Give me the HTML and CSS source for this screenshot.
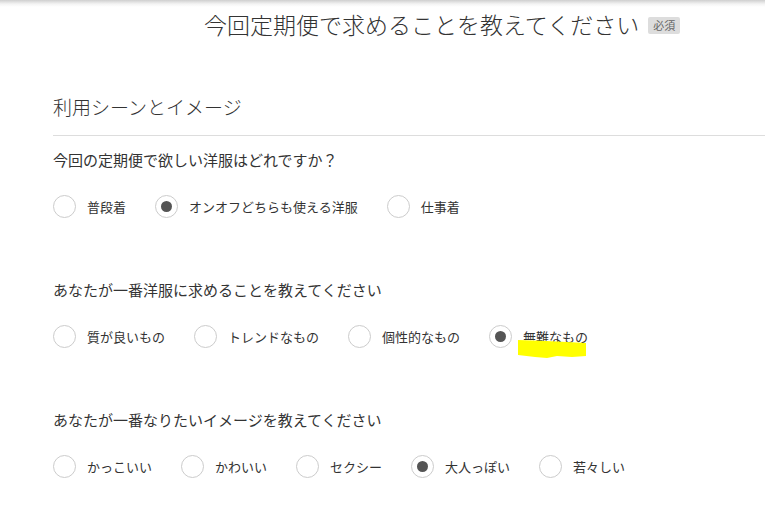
FILE: index.html
```html
<!DOCTYPE html>
<html lang="ja">
<head>
  <meta charset="UTF-8">
  <meta name="viewport" content="width=device-width, initial-scale=1.0">
  <title>定期便アンケート</title>
  <link rel="stylesheet" href="styles.css">
</head>
<body>

<div class="page">
  <!-- Page title -->
  <div class="page-title">
    <h1>今回定期便で求めることを教えてください</h1>
    <span class="required">必須</span>
  </div>

  <div class="section">
    <h2 class="section-title">利用シーンとイメージ</h2>

    <!-- Question 1 -->
    <div class="question">
      <p class="question-text">今回の定期便で欲しい洋服はどれですか？</p>
      <div class="options">
        <label class="option"><span class="radio"></span>普段着</label>
        <label class="option"><span class="radio checked"></span>オンオフどちらも使える洋服</label>
        <label class="option"><span class="radio"></span>仕事着</label>
      </div>
    </div>

    <!-- Question 2 -->
    <div class="question">
      <p class="question-text">あなたが一番洋服に求めることを教えてください</p>
      <div class="options">
        <label class="option"><span class="radio"></span>質が良いもの</label>
        <label class="option"><span class="radio"></span>トレンドなもの</label>
        <label class="option"><span class="radio"></span>個性的なもの</label>
        <label class="option"><span class="radio checked"></span><span class="marked">無難なもの<svg class="marker" width="70" height="20" viewBox="0 0 70 20"><path d="M1 1 L30 2 L50 3 L69 4 L69 17 L55 18 L40 17 L30 19 L18 18 L1 16 Z" fill="#ffff00"/></svg></span></label>
      </div>
    </div>

    <!-- Question 3 -->
    <div class="question">
      <p class="question-text">あなたが一番なりたいイメージを教えてください</p>
      <div class="options">
        <label class="option"><span class="radio"></span>かっこいい</label>
        <label class="option"><span class="radio"></span>かわいい</label>
        <label class="option"><span class="radio"></span>セクシー</label>
        <label class="option"><span class="radio checked"></span>大人っぽい</label>
        <label class="option"><span class="radio"></span>若々しい</label>
      </div>
    </div>
  </div>
</div>

</body>
</html>
```

FILE: styles.css
```css
body {
  margin: 0;
  background: linear-gradient(#cfcfcf, #f4f4f4 4px, #fff 7px) no-repeat;
  background-size: 100% 8px;
  background-color: #fff;
  font-family: "Noto Sans CJK JP", "Noto Sans", sans-serif;
  color: #333;
}

.page {
  width: 765px;
  height: 516px;
  overflow: hidden;
}

/* Title row */
.page-title {
  display: flex;
  align-items: center;
  height: 48px;
  padding-left: 204px;
}

.page-title h1 {
  margin: 0;
  font-size: 23px;
  font-weight: 300;
  line-height: 48px;
  color: #333;
}

.required {
  margin-left: 9px;
  margin-top: 2px;
  padding: 0 5px;
  background-color: #ddd;
  border-radius: 2px;
  font-size: 11px;
  line-height: 17px;
  color: #666;
}

/* Section */
.section {
  padding-left: 53px;
  padding-top: 45px;
}

.section-title {
  margin: 0;
  padding-bottom: 14px;
  border-bottom: 1px solid #ddd;
  font-size: 19px;
  font-weight: 300;
  line-height: 28px;
}

.question {
  margin-top: 61px;
}

.question:first-of-type {
  margin-top: 13px;
}

.question-text {
  margin: 0 0 24px;
  font-size: 15px;
  line-height: 22px;
}

.options {
  display: flex;
  align-items: center;
}

.option {
  display: flex;
  align-items: center;
  gap: 11px;
  margin-right: 29px;
  font-size: 13px;
  line-height: 23px;
  cursor: pointer;
}

/* Radio button */
.radio {
  display: flex;
  justify-content: center;
  align-items: center;
  box-sizing: border-box;
  width: 23px;
  height: 23px;
  border: 1px solid #ccc;
  border-radius: 50%;
  background-color: #fff;
}

.radio.checked::after {
  content: "";
  width: 11px;
  height: 11px;
  border-radius: 50%;
  background-color: #555;
}

/* Yellow marker scribble over the answer */
.marked {
  position: relative;
}

.marker {
  position: absolute;
  left: -6px;
  top: 14px;
}
```
